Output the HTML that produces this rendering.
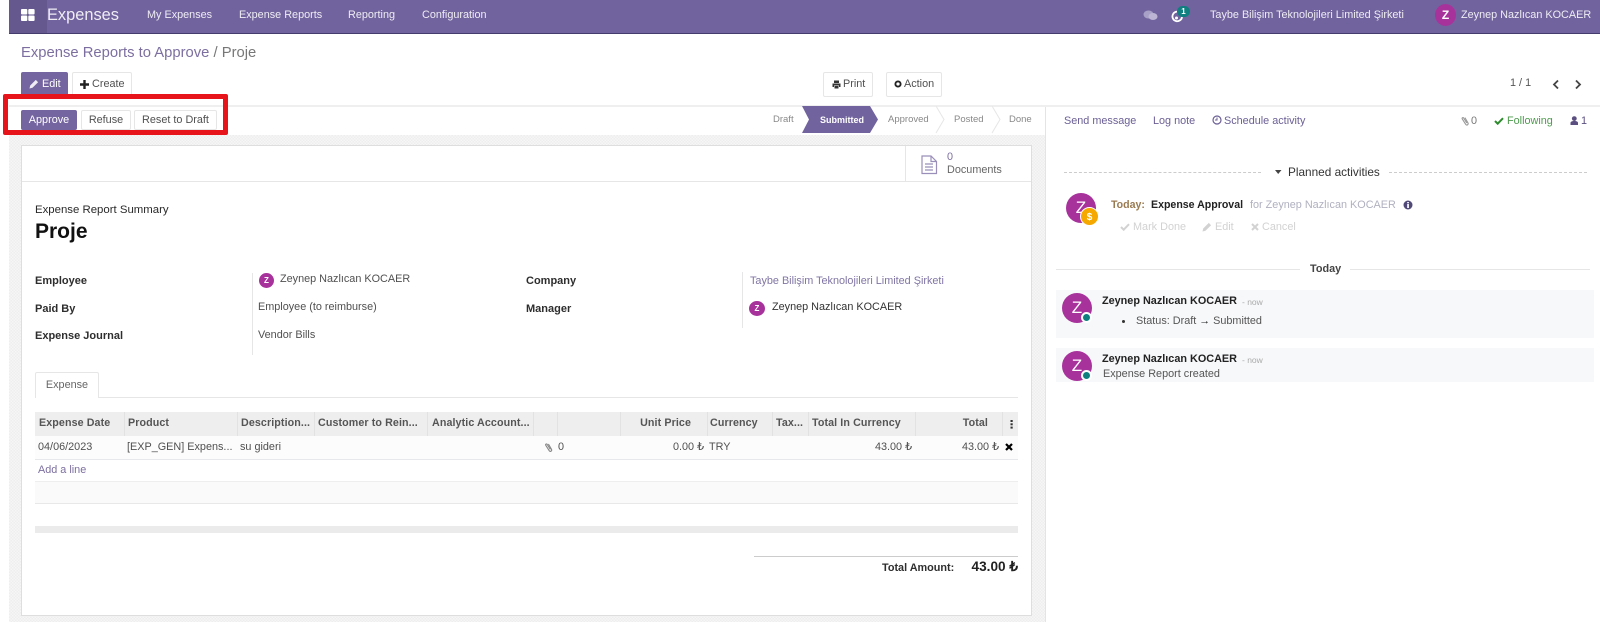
<!DOCTYPE html>
<html><head><meta charset="utf-8"><style>
html,body{margin:0;padding:0;background:#fff}
#p{position:relative;width:1600px;height:622px;overflow:hidden;background:#fff;font-family:"Liberation Sans",sans-serif;font-size:10.85px;color:#505050}
#p div,#p svg{position:absolute}
.t{white-space:nowrap;line-height:14px}
.b{font-weight:bold;font-size:11px;color:#2e2e2e}
.h{font-weight:bold;font-size:10.7px;color:#555;letter-spacing:.1px}
.n{color:#efecf4}
.btn{border:1px solid #e6e6e6;border-radius:2px;background:#fff;box-sizing:border-box;text-align:center;white-space:nowrap}
.p{background:#7464a0;color:#fff;border-color:#7464a0}
.line{background:#e6e6e6}
.v{width:1px;height:24px;top:412px;background:#e2e2e2}
.av{border-radius:50%;background:#a8329c;color:#fff;text-align:center;font-weight:bold}
.s{color:#888;font-size:9.5px}
.pu{color:#6b5f95}
.g{color:#d2d2d2}
</style></head><body><div id="p">
<!-- navbar -->
<div style="left:9px;top:0;width:1591px;height:33px;background:#71639e;border-bottom:1px solid #443c6c"></div>
<div style="left:9px;top:0;width:38px;height:33px;background:#65588f"></div>
<svg style="left:21px;top:9px" width="14" height="12"><rect x="0" y="0" width="6.300" height="5.500" rx="1" fill="#fff"/><rect x="7.300" y="0" width="6.300" height="5.500" rx="1" fill="#fff"/><rect x="0" y="6.500" width="6.300" height="5.500" rx="1" fill="#fff"/><rect x="7.300" y="6.500" width="6.300" height="5.500" rx="1" fill="#fff"/></svg>
<div class="t n" style="left:47px;top:6px;font-size:16.4px;line-height:18px">Expenses</div>
<div class="t n" style="left:147px;top:8px">My Expenses</div>
<div class="t n" style="left:239px;top:8px">Expense Reports</div>
<div class="t n" style="left:348px;top:8px">Reporting</div>
<div class="t n" style="left:422px;top:8px">Configuration</div>
<svg style="left:1143px;top:10px" width="15" height="11"><ellipse cx="5.500" cy="4.500" rx="5" ry="4" fill="#a8a0c6"/><ellipse cx="10" cy="6.500" rx="4.500" ry="3.500" fill="#bcb6d4"/></svg>
<svg style="left:1171px;top:9px" width="13" height="14"><path d="M9 3.500A4.800 4.800 0 1 0 11 8" fill="none" stroke="#fff" stroke-width="1.800"/><circle cx="5.500" cy="9" r="1.500" fill="#fff"/></svg>
<div style="left:1177px;top:6px;width:13px;height:11px;border-radius:6px;background:#0f7f80;color:#fff;font-size:8px;font-weight:bold;text-align:center;line-height:11px">1</div>
<div class="t n" style="left:1210px;top:8px">Taybe Bilişim Teknolojileri Limited Şirketi</div>
<div class="av" style="left:1435px;top:4px;width:21px;height:22px;line-height:22px;font-size:12px">Z</div>
<div class="t n" style="left:1461px;top:8px">Zeynep Nazlıcan KOCAER</div>
<!-- breadcrumb -->
<div class="t" style="left:21px;top:45px;font-size:14.8px;line-height:17px;color:#7c6fa0">Expense Reports to Approve<span style="color:#777"> / Proje</span></div>
<div class="btn p" style="left:21px;top:72px;width:47px;height:24px"></div>
<svg style="left:29px;top:79px" width="10" height="10"><path d="M0.500 9.500 1.200 6.500 6.800 0.900 9.100 3.200 3.500 8.800Z" fill="#efecf4"/></svg>
<div class="t" style="left:42px;top:77px;color:#fff">Edit</div>
<div class="btn" style="left:72px;top:72px;width:60px;height:24px"></div>
<svg style="left:80px;top:80px" width="9" height="9"><path d="M4.500 0V9M0 4.500H9" stroke="#222" stroke-width="2.400"/></svg>
<div class="t" style="left:92px;top:77px">Create</div>
<div class="btn" style="left:823px;top:72px;width:50px;height:25px"></div>
<svg style="left:832px;top:80px" width="9" height="9"><path d="M2 0.500H7V3H2ZM0.500 3.500H8.500V7H7V5.500H2V7H0.500ZM2.500 6H6.500V8.500H2.500Z" fill="#333"/></svg>
<div class="t" style="left:843px;top:77px">Print</div>
<div class="btn" style="left:886px;top:72px;width:56px;height:25px"></div>
<svg style="left:894px;top:80px" width="8" height="8"><circle cx="4" cy="4" r="2.600" fill="none" stroke="#222" stroke-width="1.900"/></svg>
<div class="t" style="left:904px;top:77px">Action</div>
<div class="t" style="left:1510px;top:76px;color:#555">1 / 1</div>
<svg style="left:1550px;top:79px" width="40" height="11"><path d="M8 1.500 4 5.500 8 9.500" fill="none" stroke="#444" stroke-width="1.800"/><path d="M26 1.500 30 5.500 26 9.500" fill="none" stroke="#444" stroke-width="1.800"/></svg>
<!-- status row -->
<div style="left:9px;top:105px;width:1591px;height:2px;background:#efefef"></div>
<div style="left:9px;top:135px;width:1036px;height:487px;background:repeating-conic-gradient(#eeeeee 0 25%,#f6f6f6 0 50%) 0 0/3px 3px"></div>
<div style="left:1045px;top:107px;width:1px;height:515px;background:#e4e4e4"></div>
<div class="btn p" style="left:21px;top:110px;width:56px;height:20px;line-height:19px">Approve</div>
<div class="btn" style="left:81px;top:110px;width:50px;height:20px;line-height:19px">Refuse</div>
<div class="btn" style="left:134px;top:110px;width:83px;height:20px;line-height:19px">Reset to Draft</div>
<div style="left:3px;top:94px;width:225px;height:41px;border:5px solid #e8141c;border-radius:2px;box-sizing:border-box"></div>
<div class="t s" style="left:773px;top:113px">Draft</div>
<svg style="left:802px;top:106px" width="260" height="28"><path d="M0 0H68L76 13.500 68 27H0L7 13.500Z" fill="#71639e"/><path d="M134 0 142 13.500 134 27M190 0 198 13.500 190 27" fill="none" stroke="#e6e6e6"/></svg>
<div class="t" style="left:820px;top:113px;color:#fff;font-size:9px;font-weight:bold">Submitted</div>
<div class="t s" style="left:888px;top:113px">Approved</div>
<div class="t s" style="left:954px;top:113px">Posted</div>
<div class="t s" style="left:1009px;top:113px">Done</div>
<!-- sheet -->
<div style="left:21px;top:145px;width:1011px;height:471px;background:#fff;border:1px solid #dedede;box-sizing:border-box"></div>
<div class="line" style="left:22px;top:181px;width:1009px;height:1px"></div>
<div class="line" style="left:905px;top:146px;width:1px;height:35px"></div>
<svg style="left:921px;top:155px" width="17" height="20"><path d="M1 1H10L15.500 6.500V18.500H1Z M10 1V6.500H15.500 M4 9H12M4 12H12M4 15H12" fill="none" stroke="#9a8fba" stroke-width="1.200"/></svg>
<div class="t" style="left:947px;top:150px;color:#7c6fa0">0</div>
<div class="t" style="left:947px;top:163px;color:#666">Documents</div>
<div class="t" style="left:35px;top:203px;color:#2a2a2a;font-size:11.4px">Expense Report Summary</div>
<div class="t" style="left:35px;top:220px;font-size:21px;line-height:24px;font-weight:bold;color:#111">Proje</div>
<div class="t b" style="left:35px;top:274px">Employee</div>
<div class="t b" style="left:35px;top:302px">Paid By</div>
<div class="t b" style="left:35px;top:329px">Expense Journal</div>
<div class="line" style="left:252px;top:273px;width:1px;height:82px"></div>
<div class="av" style="left:259px;top:273px;width:15px;height:15px;line-height:15px;font-size:8px">Z</div>
<div class="t" style="left:280px;top:272px">Zeynep Nazlıcan KOCAER</div>
<div class="t" style="left:258px;top:300px">Employee (to reimburse)</div>
<div class="t" style="left:258px;top:328px">Vendor Bills</div>
<div class="t b" style="left:526px;top:274px">Company</div>
<div class="t b" style="left:526px;top:302px">Manager</div>
<div class="line" style="left:742px;top:272px;width:1px;height:56px"></div>
<div class="t" style="left:750px;top:274px;color:#8075a4">Taybe Bilişim Teknolojileri Limited Şirketi</div>
<div class="av" style="left:749px;top:301px;width:16px;height:15px;line-height:15px;font-size:8px">Z</div>
<div class="t" style="left:772px;top:300px;color:#333">Zeynep Nazlıcan KOCAER</div>
<!-- tab -->
<div class="line" style="left:35px;top:397px;width:983px;height:1px"></div>
<div style="left:35px;top:372px;width:64px;height:26px;background:#fff;border:1px solid #e6e6e6;border-bottom:0;box-sizing:border-box;border-radius:2px 2px 0 0;text-align:center;line-height:24px;color:#666">Expense</div>
<!-- table -->
<div style="left:35px;top:412px;width:983px;height:24px;background:#eeeeee"></div>
<div style="left:35px;top:436px;width:983px;height:24px;background:#fcfcfc;border-bottom:1px solid #e6e8ec;box-sizing:border-box"></div>
<div style="left:35px;top:481px;width:983px;height:23px;background:#fafafa;border-top:1px solid #eeeeee;border-bottom:1px solid #e8e8e8;box-sizing:border-box"></div>
<div style="left:35px;top:526px;width:983px;height:7px;background:#ebebeb"></div>
<div class="v" style="left:124px"></div>
<div class="v" style="left:237px"></div>
<div class="v" style="left:314px"></div>
<div class="v" style="left:427px"></div>
<div class="v" style="left:533px"></div>
<div class="v" style="left:557px"></div>
<div class="v" style="left:620px"></div>
<div class="v" style="left:707px"></div>
<div class="v" style="left:772px"></div>
<div class="v" style="left:808px"></div>
<div class="v" style="left:915px"></div>
<div class="v" style="left:1002px"></div>
<div class="t h" style="left:39px;top:416px">Expense Date</div>
<div class="t h" style="left:128px;top:416px">Product</div>
<div class="t h" style="left:241px;top:416px">Description...</div>
<div class="t h" style="left:318px;top:416px">Customer to Rein...</div>
<div class="t h" style="left:432px;top:416px">Analytic Account...</div>
<div class="t h" style="right:909px;top:416px">Unit Price</div>
<div class="t h" style="left:710px;top:416px">Currency</div>
<div class="t h" style="left:776px;top:416px">Tax...</div>
<div class="t h" style="left:812px;top:416px">Total In Currency</div>
<div class="t h" style="right:612px;top:416px">Total</div>
<svg style="left:1010px;top:420px" width="4" height="9"><rect x="0.500" y="0" width="2.200" height="2" fill="#333"/><rect x="0.500" y="3.300" width="2.200" height="2" fill="#333"/><rect x="0.500" y="6.600" width="2.200" height="2" fill="#333"/></svg>
<div class="t" style="left:38px;top:440px">04/06/2023</div>
<div class="t" style="left:127px;top:440px">[EXP_GEN] Expens...</div>
<div class="t" style="left:240px;top:440px">su gideri</div>
<svg style="left:543px;top:442px" width="10" height="11"><path d="M8.500 5 4.200 9.300C3 10.500 1 9 2.200 7.500L6.500 2.800C7.300 2 8.600 3 7.800 3.900L3.800 8.200" fill="none" stroke="#888" stroke-width="1.100" transform="rotate(-75 5 5.500)"/></svg>
<div class="t" style="left:558px;top:440px">0</div>
<div class="t" style="right:896px;top:440px">0.00 ₺</div>
<div class="t" style="left:709px;top:440px">TRY</div>
<div class="t" style="right:688px;top:440px">43.00 ₺</div>
<div class="t" style="right:601px;top:440px">43.00 ₺</div>
<svg style="left:1005px;top:443px" width="8" height="8"><path d="M1 1 7 7M7 1 1 7" stroke="#000" stroke-width="2.200"/></svg>
<div class="t" style="left:38px;top:463px;color:#7c6fa0">Add a line</div>
<!-- total -->
<div style="left:754px;top:556px;width:264px;height:1px;background:#ccc"></div>
<div class="t b" style="left:882px;top:561px;font-size:10.85px">Total Amount:</div>
<div class="t" style="right:582px;top:560px;font-size:13.6px;font-weight:bold;color:#222">43.00 ₺</div>
<!-- chatter -->
<div class="t pu" style="left:1064px;top:114px">Send message</div>
<div class="t pu" style="left:1153px;top:114px">Log note</div>
<svg style="left:1212px;top:115px" width="10" height="10"><circle cx="5" cy="5" r="4" fill="none" stroke="#6b5f95" stroke-width="1.200"/><path d="M5 2.500V5H3" fill="none" stroke="#6b5f95"/></svg>
<div class="t pu" style="left:1224px;top:114px">Schedule activity</div>
<svg style="left:1459px;top:116px" width="10" height="10"><path d="M8.500 5 4.200 9.300C3 10.500 1 9 2.200 7.500L6.500 2.800C7.300 2 8.600 3 7.800 3.900L3.800 8.200" fill="none" stroke="#999" stroke-width="1.100" transform="rotate(-75 5 5)"/></svg>
<div class="t" style="left:1471px;top:114px;color:#777">0</div>
<svg style="left:1494px;top:117px" width="10" height="8"><path d="M1 4 3.700 6.700 9 1.200" fill="none" stroke="#2e8b2e" stroke-width="2"/></svg>
<div class="t" style="left:1507px;top:114px;color:#4f9a4f">Following</div>
<svg style="left:1570px;top:116px" width="9" height="10"><circle cx="4.300" cy="2.600" r="2.400" fill="#5a4f80"/><path d="M0.500 9V7C0.500 5.500 2 5 4.300 5S8 5.500 8 7V9Z" fill="#5a4f80"/></svg>
<div class="t" style="left:1581px;top:114px;color:#5a4f80">1</div>
<div style="left:1064px;top:172px;width:197px;border-top:1px dashed #ccc"></div>
<div style="left:1389px;top:172px;width:198px;border-top:1px dashed #ccc"></div>
<svg style="left:1275px;top:170px" width="7" height="5"><path d="M0 0H6.500L3.200 4Z" fill="#444"/></svg>
<div class="t" style="left:1288px;top:165px;color:#333;font-size:11.8px">Planned activities</div>
<div class="av" style="left:1066px;top:193px;width:30px;height:30px;line-height:30px;font-size:17px;font-weight:normal">Z</div>
<div style="left:1080px;top:207px;width:19px;height:19px;border-radius:50%;background:#f5a800;color:#fff;font-weight:bold;text-align:center;line-height:19px;font-size:10px;border:1px solid #fff;box-sizing:border-box">$</div>
<div class="t" style="left:1111px;top:198px;font-weight:bold;color:#9a7a50;font-size:10.6px">Today:</div>
<div class="t" style="left:1151px;top:198px;font-weight:bold;color:#222;font-size:10.6px">Expense Approval</div>
<div class="t" style="left:1250px;top:198px;color:#b0b0c0">for Zeynep Nazlıcan KOCAER</div>
<svg style="left:1403px;top:200px" width="10" height="10"><circle cx="5" cy="5" r="4.500" fill="#514a78"/><rect x="4.200" y="4" width="1.700" height="4" fill="#fff"/><rect x="4.200" y="2" width="1.700" height="1.300" fill="#fff"/></svg>
<svg style="left:1120px;top:223px" width="10" height="8"><path d="M1 4 3.700 6.700 9 1.200" fill="none" stroke="#d2d2d2" stroke-width="2"/></svg>
<div class="t g" style="left:1133px;top:220px">Mark Done</div>
<svg style="left:1202px;top:222px" width="10" height="10"><path d="M0.500 9.500 1.200 6.500 6.800 0.900 9.100 3.200 3.500 8.800Z" fill="#d2d2d2"/></svg>
<div class="t g" style="left:1215px;top:220px">Edit</div>
<svg style="left:1251px;top:223px" width="8" height="8"><path d="M1 1 7 7M7 1 1 7" stroke="#d2d2d2" stroke-width="2"/></svg>
<div class="t g" style="left:1262px;top:220px">Cancel</div>
<div style="left:1056px;top:269px;width:244px;height:1px;background:#e6e6e6"></div>
<div style="left:1350px;top:269px;width:240px;height:1px;background:#e6e6e6"></div>
<div class="t" style="left:1310px;top:262px;font-weight:bold;color:#444">Today</div>
<div style="left:1056px;top:290px;width:538px;height:48px;background:#f7f8fa"></div>
<div style="left:1056px;top:348px;width:538px;height:34px;background:#f7f8fa"></div>
<div class="av" style="left:1062px;top:293px;width:30px;height:30px;line-height:30px;font-size:17px;font-weight:normal">Z</div>
<div style="left:1081px;top:312px;width:11px;height:11px;border-radius:50%;background:#0f7f80;border:2px solid #fff;box-sizing:border-box"></div>
<div class="av" style="left:1062px;top:351px;width:30px;height:30px;line-height:30px;font-size:17px;font-weight:normal">Z</div>
<div style="left:1081px;top:370px;width:11px;height:11px;border-radius:50%;background:#0f7f80;border:2px solid #fff;box-sizing:border-box"></div>
<div class="t" style="left:1102px;top:294px;font-weight:bold;color:#222">Zeynep Nazlıcan KOCAER</div>
<div class="t" style="left:1242px;top:295px;color:#aaa;font-size:8.5px">- now</div>
<div style="left:1122px;top:320px;width:3px;height:3px;border-radius:50%;background:#333"></div>
<div class="t" style="left:1136px;top:314px;color:#555">Status: Draft <b style="color:#222">→</b> Submitted</div>
<div class="t" style="left:1102px;top:352px;font-weight:bold;color:#222">Zeynep Nazlıcan KOCAER</div>
<div class="t" style="left:1242px;top:353px;color:#aaa;font-size:8.5px">- now</div>
<div class="t" style="left:1103px;top:367px;color:#555">Expense Report created</div>
</div></body></html>
